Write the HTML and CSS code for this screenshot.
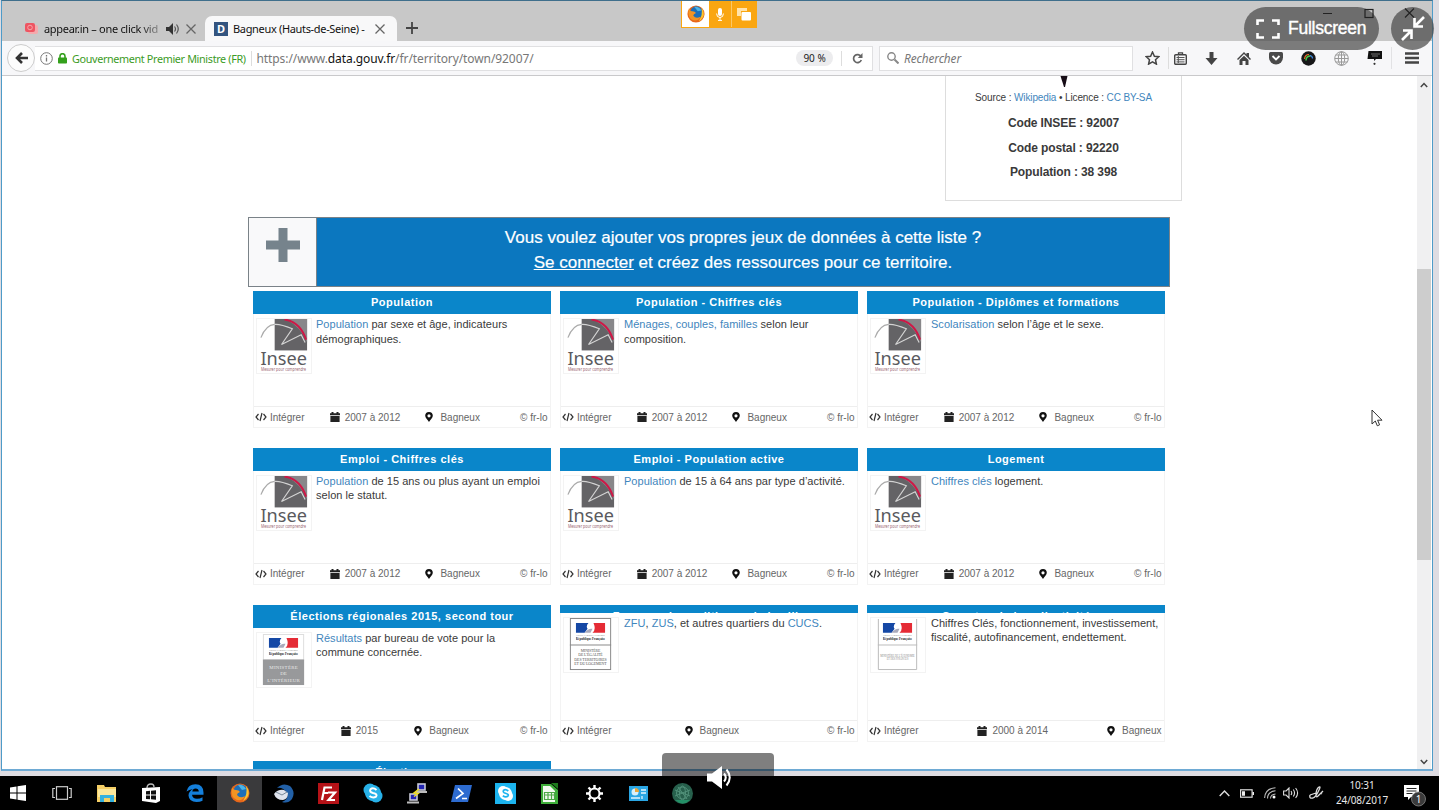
FILE: index.html
```html
<!DOCTYPE html>
<html lang="fr">
<head>
<meta charset="utf-8">
<title>Bagneux (Hauts-de-Seine)</title>
<link rel="stylesheet" href="styles.css">
</head>
<body>
<svg class="defs" width="0" height="0">
  <symbol id="insee" viewBox="0 0 55 55">
    <rect x="18" y="0" width="33" height="32" fill="#646366"/>
    <path d="M29 0h22v24Q46 9 29 0z" fill="#88878a"/>
    <path d="M28 .5Q44 3 50 21" fill="none" stroke="#cf1746" stroke-width="2"/>
    <path d="M4 19Q9 6 18 5.500" fill="none" stroke="#aaa" stroke-width="1.200"/>
    <path d="M18 5.500Q24 5 36 10L25 26L45 16L49 24" fill="none" stroke="#d4d4d4" stroke-width="1.200"/>
    <text x="3.500" y="46.500" class="insee-name" textLength="47.500" lengthAdjust="spacingAndGlyphs">Insee</text>
    <text x="4" y="53" class="insee-tag" textLength="46" lengthAdjust="spacingAndGlyphs">Mesurer pour comprendre</text>
  </symbol>
  <symbol id="flag" viewBox="0 0 30 19">
    <path d="M0 0h13q-3 3-1 6l-3 4H0z" fill="#1548a5"/><path d="M18 0h12v10H17q4-3 1-10z" fill="#e52b35"/>
    <path d="M9 10q4-5 8-4l-2 4z" fill="#aab"/>
    <text x="0" y="13.800" class="flag-sub" textLength="30" lengthAdjust="spacingAndGlyphs">Liberté • Égalité • Fraternité</text>
    <text x="0" y="17.500" class="flag-main" textLength="30" lengthAdjust="spacingAndGlyphs">République Française</text>
  </symbol>
  <symbol id="code" viewBox="0 0 12 10"><path d="M3.500 2L1 5l2.500 3M8.500 2L11 5l-2.500 3M7 1L5 9" fill="none" stroke="#333" stroke-width="1.200"/></symbol>
  <symbol id="cal" viewBox="0 0 10 10"><path d="M0 1.300h1.500V0h2v1.300h3V0h2v1.300H10v2H0zM.4 4h9.200v6H.4z" fill="#222"/></symbol>
  <symbol id="pin" viewBox="0 0 8 10"><path fill-rule="evenodd" d="M4 0a3.800 3.800 0 0 1 3.800 3.800C7.800 6 5.500 7.500 4 10 2.500 7.500.2 6 .2 3.800A3.800 3.800 0 0 1 4 0zm0 2.200a1.600 1.600 0 1 0 0 3.200 1.600 1.600 0 0 0 0-3.200z" fill="#111"/></symbol>
  <symbol id="firefox" viewBox="0 0 20 20">
    <circle cx="10" cy="10" r="9.500" fill="#e8671a"/><circle cx="10.500" cy="8.500" r="7" fill="#1d6fb8"/><path d="M8 2q5-1 8 4l-4 1z" fill="#49b5e8"/>
    <path d="M2 4q1 3 4 3 3 0 4 2-3 1-3 3 3 4 8 1-2 5-8 4Q0 15 2 4z" fill="#f39423"/><path d="M16 3q4 5 2 10-2 4-5 5 5-7 3-15z" fill="#fbc52d"/>
  </symbol>
</svg>

<div class="desktop">
  <main class="window">
    <div class="tabs">
      <div class="tab tab-idle">
        <svg width="13" height="13" viewBox="0 0 13 13"><rect x="3" y="3" width="10" height="9" rx="2" fill="#f4a9ac"/><rect width="10" height="9" y="1" rx="2" fill="#ee5562"/><circle cx="5" cy="5.500" r="2.300" fill="none" stroke="#f9a5a8"/></svg>
        <span class="tab-title fade">appear.in – one click vid</span>
        <svg width="14" height="12" viewBox="0 0 14 12"><path d="M0 4h3l4-4v12L3 8H0z" fill="#333"/><path d="M8.500 3.500q2 2.500 0 5M10.500 1.500q3.500 4.500 0 9" fill="none" stroke="#555" stroke-width="1.200"/></svg>
        <svg width="10" height="10" viewBox="0 0 10 10"><path d="M.5.5l9 9m0-9l-9 9" stroke="#666" stroke-width="1.300"/></svg>
      </div>
      <div class="tab tab-active">
        <span class="fav">D</span>
        <span class="tab-title t2">Bagneux (Hauts-de-Seine) -</span>
        <svg width="10" height="10" viewBox="0 0 10 10"><path d="M.5.5l9 9m0-9l-9 9" stroke="#666" stroke-width="1.300"/></svg>
      </div>
      <svg class="plus" width="12" height="12" viewBox="0 0 12 12"><path d="M6 0v12M0 6h12" stroke="#444" stroke-width="1.800"/></svg>
    </div>

    <div class="toolbar">
      <span class="back"><svg width="13" height="12" viewBox="0 0 13 12"><path d="M7 1L2 6l5 5M2 6h11" fill="none" stroke="#333" stroke-width="2.600"/></svg></span>
      <div class="url">
        <svg width="13" height="13" viewBox="0 0 13 13"><circle cx="6.500" cy="6.500" r="5.800" fill="none" stroke="#777"/><path d="M6.500 5.500v4M6.500 3v1.500" stroke="#777" stroke-width="1.300"/></svg>
        <svg class="lock" width="9" height="11" viewBox="0 0 9 11"><path d="M2 5V3.200a2.500 2.500 0 0 1 5 0V5" fill="none" stroke="#34a01c" stroke-width="1.600"/><rect y="4.500" width="9" height="6" rx=".8" fill="#34a01c"/></svg>
        <span class="ident">Gouvernement Premier Ministre (FR)</span>
        <span class="addr">https://www.<b>data.gouv.fr</b>/fr/territory/town/92007/</span>
        <span class="zoom">90 %</span>
        <span class="reload"><svg width="11" height="11" viewBox="0 0 11 11"><path d="M9 3.500A4 4 0 1 0 9.300 7" fill="none" stroke="#666" stroke-width="1.700"/><path d="M10.500 0v5H5.800z" fill="#666"/></svg></span>
      </div>
      <div class="search">
        <svg width="12" height="12" viewBox="0 0 12 12"><circle cx="4.500" cy="4.500" r="3.700" fill="none" stroke="#888" stroke-width="1.400"/><path d="M7.500 7.500l4 4" stroke="#888" stroke-width="2"/></svg>
        <i>Rechercher</i>
      </div>
      <div class="tools">
        <span><svg width="15" height="14" viewBox="0 0 15 14"><path d="M7.500 1l1.900 4.200 4.400.5-3.300 3 .9 4.400-3.900-2.200-3.900 2.200.9-4.400-3.300-3 4.400-.5z" fill="none" stroke="#444" stroke-width="1.500"/></svg></span>
        <span class="sep-l"><svg width="13" height="13" viewBox="0 0 13 13"><path d="M4.500 2.500V.8h4v1.700" fill="none" stroke="#444" stroke-width="1.300"/><rect x=".7" y="2.700" width="11.600" height="9.600" rx="1" fill="none" stroke="#444" stroke-width="1.400"/><path d="M2.500 5.500h8M2.500 7.700h8M2.500 9.900h8M4.300 4v7" stroke="#555"/></svg></span>
        <span><svg width="13" height="13" viewBox="0 0 13 13"><path d="M4.500 0h4v6h4l-6 7-6-7h4z" fill="#444"/></svg></span>
        <span><svg width="14" height="13" viewBox="0 0 14 13"><path d="M7 0l2.500 2.500V1H12v4l2 2-1 1-6-6-6 6-1-1zM2.500 8L7 3.700 11.500 8v5H8.500V9h-3v4h-3z" fill="#444"/></svg></span>
        <span><svg width="14" height="13" viewBox="0 0 14 13"><path d="M1.500 0h11Q14 0 14 1.500v4a7 7 0 0 1-14 0v-4Q0 0 1.500 0z" fill="#4a4a4a"/><path d="M3.500 4L7 7.500 10.500 4" fill="none" stroke="#fff" stroke-width="1.800"/></svg></span>
        <span><svg width="15" height="15" viewBox="0 0 15 15"><circle cx="7.500" cy="7.500" r="7.200" fill="#171719"/><path d="M3.500 8Q4 3.500 8 3.500" fill="none" stroke="#ef6a26" stroke-width="1.200"/><path d="M5 9.500q0-4.500 4.500-4.500" fill="none" stroke="#45c749" stroke-width="1.500"/><path d="M9 4.500q2.500.5 2.500 3" fill="none" stroke="#3d8bea" stroke-width="1.200"/></svg></span>
        <span><svg width="15" height="15" viewBox="0 0 15 15"><g fill="none" stroke="#999"><circle cx="7.500" cy="7.500" r="6.800"/><ellipse cx="7.500" cy="7.500" rx="3.200" ry="6.800"/><path d="M7.500.7v13.600M.7 7.500h13.600M1.700 4h11.600M1.700 11h11.600"/></g></svg></span>
        <span><svg width="15" height="14" viewBox="0 0 15 14"><path d="M1.500 0H15v8H9L7 10V8H.5z" fill="#111"/><path d="M4 3h9M5 5h6" stroke="#888" stroke-width=".8"/><circle cx="7.500" cy="12.800" r="1.100" fill="#333"/></svg></span>
        <span class="menu"><svg width="14" height="12" viewBox="0 0 14 12"><path d="M0 1.500h14M0 6h14M0 10.500h14" stroke="#444" stroke-width="2.300"/></svg></span>
      </div>
    </div>

    <div class="viewport">
      <div class="page">
        <aside class="facts">
          <svg class="tip" width="8" height="12" viewBox="0 0 8 12"><path d="M.5 0h7L5 11H4z" fill="#160c16"/></svg>
          <p class="source">Source : <a>Wikipedia</a> • Licence : <a>CC BY-SA</a></p>
          <p class="fact">Code INSEE : 92007</p>
          <p class="fact">Code postal : 92220</p>
          <p class="fact">Population : 38 398</p>
        </aside>

        <section class="banner">
          <div class="add"><svg width="34" height="34" viewBox="0 0 34 34"><path d="M12.500 0h9v12.500H34v9H21.500V34h-9V21.500H0v-9h12.500z" fill="#76838c"/></svg></div>
          <div class="banner-text"><p>Vous voulez ajouter vos propres jeux de données à cette liste ?</p><p><u>Se connecter</u> et créez des ressources pour ce territoire.</p></div>
        </section>

        <section class="cards">
          <article class="card"><h2>Population</h2><div class="body"><svg class="logo"><use href="#insee"/></svg><p><a>Population</a> par sexe et âge, indicateurs<br>démographiques.</p></div>
            <footer><span><svg class="code"><use href="#code"/></svg>Intégrer</span><span><svg class="cal"><use href="#cal"/></svg>2007 à 2012</span><span><svg class="pin"><use href="#pin"/></svg>Bagneux</span><span class="lic">© fr-lo</span></footer></article>
          <article class="card"><h2>Population - Chiffres clés</h2><div class="body"><svg class="logo"><use href="#insee"/></svg><p><a>Ménages, couples, familles</a> selon leur<br>composition.</p></div>
            <footer><span><svg class="code"><use href="#code"/></svg>Intégrer</span><span><svg class="cal"><use href="#cal"/></svg>2007 à 2012</span><span><svg class="pin"><use href="#pin"/></svg>Bagneux</span><span class="lic">© fr-lo</span></footer></article>
          <article class="card"><h2>Population - Diplômes et formations</h2><div class="body"><svg class="logo"><use href="#insee"/></svg><p><a>Scolarisation</a> selon l’âge et le sexe.</p></div>
            <footer><span><svg class="code"><use href="#code"/></svg>Intégrer</span><span><svg class="cal"><use href="#cal"/></svg>2007 à 2012</span><span><svg class="pin"><use href="#pin"/></svg>Bagneux</span><span class="lic">© fr-lo</span></footer></article>

          <article class="card"><h2>Emploi - Chiffres clés</h2><div class="body"><svg class="logo"><use href="#insee"/></svg><p><a>Population</a> de 15 ans ou plus ayant un emploi<br>selon le statut.</p></div>
            <footer><span><svg class="code"><use href="#code"/></svg>Intégrer</span><span><svg class="cal"><use href="#cal"/></svg>2007 à 2012</span><span><svg class="pin"><use href="#pin"/></svg>Bagneux</span><span class="lic">© fr-lo</span></footer></article>
          <article class="card"><h2>Emploi - Population active</h2><div class="body"><svg class="logo"><use href="#insee"/></svg><p><a>Population</a> de 15 à 64 ans par type d’activité.</p></div>
            <footer><span><svg class="code"><use href="#code"/></svg>Intégrer</span><span><svg class="cal"><use href="#cal"/></svg>2007 à 2012</span><span><svg class="pin"><use href="#pin"/></svg>Bagneux</span><span class="lic">© fr-lo</span></footer></article>
          <article class="card"><h2>Logement</h2><div class="body"><svg class="logo"><use href="#insee"/></svg><p><a>Chiffres clés</a> logement.</p></div>
            <footer><span><svg class="code"><use href="#code"/></svg>Intégrer</span><span><svg class="cal"><use href="#cal"/></svg>2007 à 2012</span><span><svg class="pin"><use href="#pin"/></svg>Bagneux</span><span class="lic">© fr-lo</span></footer></article>

          <article class="card"><h2>Élections régionales 2015, second tour</h2><div class="body">
            <svg class="logo" viewBox="0 0 55 55"><rect x="6.500" y="1.500" width="41" height="26" fill="#fff" stroke="#ddd"/><use href="#flag" x="12" y="5" width="30" height="19"/><rect x="6" y="27" width="42" height="26" fill="#98999b"/><g class="min min-w"><text x="27" y="36.500" textLength="29">MINISTÈRE</text><text x="27" y="43">DE</text><text x="27" y="49.500" textLength="33">L’INTÉRIEUR</text></g></svg>
            <p><a>Résultats</a> par bureau de vote pour la<br>commune concernée.</p></div>
            <footer><span><svg class="code"><use href="#code"/></svg>Intégrer</span><span><svg class="cal"><use href="#cal"/></svg>2015</span><span><svg class="pin"><use href="#pin"/></svg>Bagneux</span><span class="lic">© fr-lo</span></footer></article>
          <article class="card squeezed"><h2>Zonages des politiques de la ville</h2><div class="body">
            <svg class="logo" viewBox="0 0 55 55"><rect x="6.500" y="0.500" width="41" height="52" fill="#fff" stroke="#888"/><path d="M6 27.500h42" stroke="#888"/><use href="#flag" x="12" y="5" width="30" height="19"/><g class="min"><text x="27" y="34.500" textLength="20">MINISTÈRE</text><text x="27" y="39" textLength="25">DE L’ÉGALITÉ</text><text x="27" y="43.500" textLength="33">DES TERRITOIRES</text><text x="27" y="48" textLength="33">ET DU LOGEMENT</text></g></svg>
            <p><a>ZFU</a>, <a>ZUS</a>, et autres quartiers du <a>CUCS</a>.</p></div>
            <footer><span><svg class="code"><use href="#code"/></svg>Intégrer</span><span><svg class="pin"><use href="#pin"/></svg>Bagneux</span><span class="lic">© fr-lo</span></footer></article>
          <article class="card squeezed"><h2>Comptes de la collectivité</h2><div class="body">
            <svg class="logo" viewBox="0 0 55 55"><path d="M7.500 1v51.500h39V1M7 27.500h40" fill="none" stroke="#bbb"/><use href="#flag" x="12" y="5" width="30" height="19"/><g class="min min-s"><text x="27" y="39.500" textLength="35" lengthAdjust="spacingAndGlyphs">MINISTÈRE DE L’ÉCONOMIE</text><text x="27" y="43" textLength="22" lengthAdjust="spacingAndGlyphs">ET DES FINANCES</text></g></svg>
            <p>Chiffres Clés, fonctionnement, investissement,<br>fiscalité, autofinancement, endettement.</p></div>
            <footer><span><svg class="code"><use href="#code"/></svg>Intégrer</span><span><svg class="cal"><use href="#cal"/></svg>2000 à 2014</span><span><svg class="pin"><use href="#pin"/></svg>Bagneux</span></footer></article>

          <article class="card"><h2>Élections</h2></article>
        </section>
      </div>
      <div class="scroll">
        <svg width="8" height="6" viewBox="0 0 8 6"><path d="M.8 5L4 1.500 7.200 5" fill="none" stroke="#444" stroke-width="1.500"/></svg>
        <div class="thumb"></div>
        <svg class="down" width="8" height="6" viewBox="0 0 8 6"><path d="M.8 1L4 4.500 7.200 1" fill="none" stroke="#444" stroke-width="1.500"/></svg>
      </div>
    </div>
  </main>
</div>

<nav class="taskbar">
  <div class="apps">
    <span><svg width="16" height="16" viewBox="0 0 16 16"><path d="M0 2.500l6.500-1v6H0zM7.500 1.300L16 0v7.500H7.500zM0 8.500h6.500v6L0 13.600zM7.500 8.500H16V16l-8.500-1.200z" fill="#fff"/></svg></span>
    <span><svg width="20" height="14" viewBox="0 0 20 14"><g fill="none" stroke="#ccc" stroke-width="1.200"><rect x="4.500" y=".7" width="11" height="12.600"/><path d="M3 2.500H.8v9H3M17 2.500h2.200v9H17"/></g></svg></span>
    <span><svg width="20" height="17" viewBox="0 0 20 17"><path d="M0 0h7l1 2h11v15H0z" fill="#f5cf66"/><path d="M1 4h18v8H1z" fill="#fce79b"/><path d="M3 10h14v7h-4v-4H7v4H3z" fill="#35b1df"/></svg></span>
    <span><svg width="20" height="20" viewBox="0 0 20 20"><path d="M6 5q0-4 4-4 3 0 3 3" fill="none" stroke="#bbb" stroke-width="1.300"/><path d="M1 5l18-1v14l-4 2L1 18z" fill="#fff"/><path d="M5 8.200l4-.4v3.700H5zM10 7.700l5-.5v4.300h-5zM5 12.500h4v3.700L5 16zM10 12.500h5v4.300l-5-.5z" fill="#111"/></svg></span>
    <span><svg width="18" height="18" viewBox="0 0 18 18"><path fill-rule="evenodd" d="M.5 7.500Q2 .2 9.500.2q8 0 8 8.500v2H6q.5 4 5 4 3 0 5.500-1.500v3.500Q14 18 10.500 18 3 18 2.500 11.500q0-4 4.500-6.500Q3 5.500.5 7.500zM6.300 7.500h6.500q-.2-3-3.200-3-2.800 0-3.300 3z" fill="#147fdb"/></svg></span>
    <span class="on"><svg width="20" height="20"><use href="#firefox"/></svg></span>
    <span><svg width="21" height="19" viewBox="0 0 21 19"><path d="M4 4Q10-2 17 2q6 6 2 13-4 5-10 3 7-3 5-9Q10 3 4 4z" fill="#2260a7"/><path d="M1 10q4-5 10-4l4 3q0 6-5 7-7 0-9-6z" fill="#dfe4ed"/><path d="M3 8l6 3 5-3" fill="none" stroke="#789"/></svg></span>
    <span><svg width="21" height="21" viewBox="0 0 21 21"><rect width="21" height="21" fill="#b51217"/><path d="M4 17L6.500 4.500H14M5.500 10H10M10 9.500h7L10.500 17H17" fill="none" stroke="#fff" stroke-width="2.200"/></svg></span>
    <span><svg width="20" height="20" viewBox="0 0 20 20"><circle cx="7" cy="7" r="6.500" fill="#28b1e8"/><circle cx="13" cy="13" r="6.500" fill="#28b1e8"/><circle cx="10" cy="10" r="8" fill="#28b1e8"/><path d="M13.500 7Q10 4 7.500 6.300 6 9 10 10q5 1 3 3.700-3 2-6.500-.7" fill="none" stroke="#fff" stroke-width="2"/></svg></span>
    <span><svg width="20" height="21" viewBox="0 0 20 21"><g fill="#2426b4" stroke="#c9cad6" stroke-width="1.600"><rect x="11" y="1" width="7" height="6"/><rect x="3" y="11" width="7" height="6"/></g><path d="M9 9h11M0 19.500h12" stroke="#bbb" stroke-width="2"/><path d="M12 6L7 10l4 .5-4 3" fill="none" stroke="#f0dd23" stroke-width="1.500"/></svg></span>
    <span><svg width="21" height="17" viewBox="0 0 21 17"><path d="M4 0h17l-4 17H0z" fill="#2d6bd0"/><path d="M7 3.500l5 5-7 5M11 13.500h5" fill="none" stroke="#fff" stroke-width="1.700"/></svg></span>
    <span><svg width="21" height="21" viewBox="0 0 21 21"><rect width="21" height="21" fill="#1cb4ef"/><circle cx="8" cy="8" r="5" fill="#fff"/><circle cx="13" cy="13" r="5" fill="#fff"/><circle cx="10.500" cy="10.500" r="6.500" fill="#fff"/><path d="M13.300 8Q10.500 5.500 8.500 7.300 7.500 9.500 10.500 10.300q4 1 2.300 3-2.300 1.400-5-.5" fill="none" stroke="#1cb4ef" stroke-width="1.700"/></svg></span>
    <span><svg width="17" height="21" viewBox="0 0 17 21"><path d="M0 1h10l7 6v14H0z" fill="#3fae3a"/><path d="M2 3h7l5 5v11H2z" fill="#f3fbf0"/><path d="M10 0h7v6z" fill="#1d7a1c"/><path d="M3.500 9.500h10v7h-10zM3.500 12h10M7 9.500v7M10.500 9.500v7" fill="none" stroke="#4ca845" stroke-width="1.200"/></svg></span>
    <span><svg width="17" height="17" viewBox="0 0 17 17"><circle cx="8.500" cy="8.500" r="5" fill="none" stroke="#fff" stroke-width="2"/><path d="M8.500 0v3M8.500 14v3M0 8.500h3M14 8.500h3M2.500 2.500l2 2M12.500 12.500l2 2M14.500 2.500l-2 2M4.500 12.500l-2 2" stroke="#fff" stroke-width="2.400"/></svg></span>
    <span><svg width="19" height="15" viewBox="0 0 19 15"><rect width="19" height="15" fill="#2aa6e4"/><circle cx="6" cy="6" r="3.500" fill="#d8effa"/><path d="M6 6V2a4 4 0 0 1 4 4z" fill="#e8a63c"/><path d="M12 4h5M12 7h5M2 12h9M13 10v3" stroke="#e3f5fd" stroke-width="1.300"/></svg></span>
    <span><svg width="21" height="21" viewBox="0 0 21 21"><circle cx="10.500" cy="10.500" r="10.500" fill="#27604c"/><g fill="none" stroke="#519079"><circle cx="10.500" cy="10" r="6"/><ellipse cx="10.500" cy="10" rx="3" ry="7"/><path d="M3 7l15 6M3 13l15-6M6 4l9 12"/></g><path d="M3 17h15q-7 7-15 0z" fill="#249067"/></svg></span>
  </div>
  <div class="tray">
    <svg width="11" height="7" viewBox="0 0 11 7"><path d="M.7 6l4.800-5 4.800 5" fill="none" stroke="#ddd" stroke-width="1.400"/></svg>
    <svg class="bat" width="14" height="9" viewBox="0 0 14 9"><rect x=".6" y=".8" width="11.500" height="7.400" fill="none" stroke="#ddd" stroke-width="1.200"/><path d="M2 2.200h3v4.600H2zM12.500 3H14v3h-1.500z" fill="#eee"/></svg>
    <svg class="wifi" width="12" height="12" viewBox="0 0 12 12"><g fill="none" stroke="#bbb" stroke-width="1.100"><path d="M.6 11Q1 1.500 11.500.8M3.500 11.500Q3.500 4.500 11.500 3.800M6.500 11.500q0-4 5-4.500"/></g><circle cx="10" cy="10" r="1.500" fill="#fff"/></svg>
    <svg class="snd" width="16" height="12" viewBox="0 0 16 12"><path d="M.6 4h2.500L6 1v10L3.100 8H.6zM8 4q1.500 2 0 4M10.300 2.500q2.500 3.500 0 7M12.600 1q4 5 0 10" fill="none" stroke="#ddd" stroke-width="1.100"/></svg>
    <svg class="pen" width="15" height="14" viewBox="0 0 15 14"><path d="M1 9q-1 4 3 3 3-1 6-8 2-4 0-3-3 2-3 8 0 3 2 1l5-5-2 2 1 1M1 9l6-2" fill="none" stroke="#ddd" stroke-width="1.300"/></svg>
    <div class="clock"><span>10:31</span><span>24/08/2017</span></div>
    <svg class="notif" width="23" height="23" viewBox="0 0 23 23"><path d="M0 1h15v12H7l-3 3v-3H0z" fill="#fff"/><path d="M2.500 4.500h10M2.500 7h10M2.500 9.500h6" stroke="#222"/><circle cx="14.500" cy="15" r="7" fill="#3b3b3b" stroke="#888" stroke-width=".8"/><text x="14.500" y="18.500" class="badge">1</text></svg>
  </div>
</nav>

<div class="share"><span class="share-ff"><svg width="18" height="18"><use href="#firefox"/></svg></span><span class="share-mic"><svg width="8" height="13" viewBox="0 0 8 13"><rect x="2" width="4" height="8" rx="2" fill="#fff"/><path d="M.6 5.500q0 4 3.400 4t3.400-4M4 9v3M2 12.400h4" fill="none" stroke="#fff"/></svg></span><span class="share-win"><svg width="14" height="13" viewBox="0 0 14 13"><path d="M0 0h10v3H4v5H0z" fill="#ffe3ad"/><rect x="4.500" y="4" width="9.500" height="8.500" rx="1" fill="#fff"/></svg></span></div>
<div class="fullscreen"><svg width="24" height="20" viewBox="0 0 24 20"><path d="M1.500 6V1.500H8M16 1.500h6.500V6M22.500 14v4.500H16M8 18.500H1.500V14" fill="none" stroke="#fff" stroke-width="2.600"/></svg><span>Fullscreen</span></div>
<div class="shrink"><svg width="24" height="25" viewBox="0 0 24 25"><path d="M23 1l-8 8M13.500 2v8.500H22M1 24l8-8M2 14.500h8.500V23" fill="none" stroke="#fff" stroke-width="2.600"/></svg></div>
<svg class="controls" width="92" height="11" viewBox="0 0 92 11"><path d="M0 5.500h9M82 .5l9 9m0-9l-9 9" stroke="#222" stroke-width="1.100"/><rect x="42" y="1.500" width="8" height="8" fill="none" stroke="#222" stroke-width="1.200"/></svg>
<div class="volume"></div>
<svg class="speaker" width="25" height="23" viewBox="0 0 25 23"><path d="M0 7.500h5L15 0v23L5 15.500H0z" fill="#fff"/><path d="M17 7.500q3.500 4 0 8M19.500 3.500q6.500 8 0 16" fill="none" stroke="#fff" stroke-width="2"/></svg>
<svg class="cursor" width="12" height="18" viewBox="0 0 12 18"><path d="M1 1v14l3.300-3 2 4.800 2.300-1-2-4.600H11z" fill="#fff" stroke="#333"/></svg>
</body>
</html>
```

FILE: styles.css
```css
* { box-sizing: border-box; }
body { margin: 0; width: 1439px; height: 810px; overflow: hidden; position: relative; display: flex; flex-direction: column; background: #000; font-family: "Liberation Sans", Arial, sans-serif; }
p, h2 { margin: 0; }
svg { display: block; flex: none; }
.defs { position: absolute; }

.desktop { height: 776px; padding: 0 6px 5px 1px; background: #dedce2; }
.window { height: 771px; display: flex; flex-direction: column; background: #fff; border: 1px solid #4e9bc8; border-top-color: #3f6f8c; border-bottom: 2px solid #6eaad4; overflow: hidden; }

.tabs { height: 40px; flex: none; display: flex; align-items: flex-end; background: #c8c8c8; font: 11px/25px "Noto Sans", sans-serif; color: #111; }
.tab { height: 25px; display: flex; align-items: center; }
.tab-idle { width: 203px; padding-left: 23px; gap: 6px; }
.tab-title { white-space: nowrap; overflow: hidden; letter-spacing: -.33px; }
.fade { width: 116px; letter-spacing: -.3px; -webkit-mask-image: linear-gradient(90deg, #000 82%, rgba(0, 0, 0, .3)); mask-image: linear-gradient(90deg, #000 82%, rgba(0, 0, 0, .3)); }
.tab-active { width: 192px; background: #f8f8f9; border-radius: 7px 7px 0 0; padding-left: 9px; gap: 5px; }
.t2 { width: 137px; }
.fav { width: 14px; height: 14px; background: #33547f; color: #fff; font: bold 11px/14px "Noto Sans", sans-serif; text-align: center; }
.plus { margin: 0 0 7px 9px; }

.toolbar { height: 35px; flex: none; display: flex; align-items: center; background: #f7f7f9; border-bottom: 1px solid #c9c9cb; font-family: "Noto Sans", sans-serif; }
.back { width: 28px; height: 28px; margin-left: 5px; border: 1px solid #ccc; border-radius: 50%; background: #fcfcfc; display: flex; align-items: center; justify-content: center; flex: none; }
.url { width: 838px; height: 25px; display: flex; align-items: center; background: #fff; border: 1px solid #e0e0e2; border-left: 0; padding-left: 5px; font-size: 11.500px; }
.lock { margin-left: 5px; }
.ident { width: 180px; flex: none; margin-left: 5px; border-right: 1px solid #ddd; color: #3b9b25; font-size: 10.800px; white-space: nowrap; letter-spacing: -.35px; }
.addr { margin-left: 4.500px; color: #777; white-space: nowrap; letter-spacing: -.09px; font-size: 12px; }
.addr b { font-weight: 400; color: #111; }
.zoom { width: 37px; height: 16px; margin-left: auto; margin-right: -3px; border-radius: 8px; background: #ececee; font-size: 10px; line-height: 16px; text-align: center; color: #222; }
.reload { margin-left: 11px; width: 31px; height: 15px; border-left: 1px solid #ddd; display: flex; align-items: center; justify-content: center; }
.url { width: 840px; }
.search { width: 254px; height: 25px; margin-left: 6px; display: flex; align-items: center; gap: 5px; padding-left: 7px; background: #fff; border: 1px solid #e0e0e2; color: #777; font-size: 11.800px; letter-spacing: -.1px; }
.tools { display: flex; align-items: center; margin-left: 4px; }
.tools span { width: 32.600px; height: 22px; display: flex; align-items: center; justify-content: center; }
.tools span:nth-child(1) { width: 31px; }
.tools .sep-l { width: 25px; border-left: 1px solid #ddd; }
.tools span:nth-child(3) { width: 37px; }
.tools span:nth-child(4) { width: 28px; }
.tools span:nth-child(5) { width: 37px; }
.tools span:nth-child(6) { width: 28.500px; }
.tools span:nth-child(7) { width: 36px; }
.tools span:nth-child(8) { width: 30px; }
.tools .menu { width: 41px; border-left: 1px solid #e2e2e4; margin-left: 2px; }

.viewport { flex: 1; min-height: 0; display: flex; overflow: hidden; }
.page { width: 1415px; padding-left: 246px; overflow: hidden; }
.facts { width: 237px; height: 125px; margin-left: 697px; border: 1px solid #ddd; border-top: 0; display: flex; flex-direction: column; align-items: center; color: #3a3a3a; }
.tip { height: 12px; }
.source { margin-top: 2px; font-size: 10px; line-height: 15px; letter-spacing: -.12px; white-space: nowrap; }
a { color: #3f86bd; }
.fact { font-weight: 700; font-size: 12px; line-height: 24.500px; letter-spacing: -.12px; }
.source + .fact { margin-top: 6px; }
.banner { width: 922px; height: 70px; margin-top: 16px; border: 1px solid #7a8288; display: flex; background: #0b77bf; color: #fff; }
.add { width: 68px; background: #f9f9fa; border-right: 1px solid #7a8288; display: flex; justify-content: center; padding-top: 10px; }
.banner-text { flex: 1; padding-top: 8px; font-size: 17px; line-height: 24.500px; text-align: center; white-space: nowrap; -webkit-text-stroke: .2px #fff; }
.cards { display: grid; grid-template-columns: repeat(3, 298px); grid-auto-rows: 137px; column-gap: 9px; row-gap: 19.800px; margin: 4px 0 0 5px; }
.card { display: flex; flex-direction: column; border: 1px solid #f3f3f3; border-top: 0; }
.card h2 { height: 23px; flex: none; margin: 0 -1px; background: #0a86ca; color: #fff; font-size: 11px; line-height: 23px; text-align: center; letter-spacing: .52px; overflow: hidden; }
.squeezed h2 { height: 8px; }
.body { flex: 1; display: flex; padding: 3px 0 0 2px; font-size: 11px; line-height: 14.600px; letter-spacing: .03px; color: #3a3a3a; white-space: nowrap; }
.card:not(:nth-child(3n+1)) .body p { margin-left: 1px; }
.logo { width: 56px; height: 56px; border: 1px solid #f3f3f3; margin: 1px 4px 0 0; }
.card footer { height: 21px; flex: none; border-top: 1px solid #eee; padding: 0 2.500px 0 1px; display: flex; justify-content: space-between; align-items: center; font-size: 10px; color: #666; white-space: nowrap; }
.card footer span { display: flex; align-items: center; }
.code { width: 12px; height: 10px; margin-right: 3px; }
.cal { width: 10px; height: 10px; margin-right: 5px; }
.pin { width: 8px; height: 10px; margin-right: 7px; }
.card footer .lic { padding-left: 15px; }
.insee-name { font: 19px "Noto Sans", sans-serif; fill: #5a5a5e; }
.insee-tag { font: 4.500px "Noto Sans", sans-serif; fill: #99636f; }
.flag-sub { font: 2.500px "Liberation Serif", serif; fill: #777; }
.flag-main { font: bold 3.300px "Liberation Serif", serif; fill: #222; }
.min { font: 4px "Liberation Serif", serif; fill: #555; text-anchor: middle; }
.min-w { font-size: 5px; fill: #e8e8e8; }
.min-s { font-size: 3px; fill: #888; }

.scroll { width: 14px; background: #f0f0f1; display: flex; flex-direction: column; align-items: center; padding: 6px 0 4px; }
.thumb { width: 14px; height: 291px; margin-top: 181px; background: #cdcdcd; }
.down { margin-top: auto; }

.taskbar { height: 34px; display: flex; background: #000; overflow: hidden; }
.apps { display: flex; margin-left: -4px; }
.apps span { width: 44.300px; height: 34px; display: flex; align-items: center; justify-content: center; }
.apps .on { background: #3a3a3c; }
.tray { margin-left: auto; display: flex; align-items: center; color: #e8e8e8; }
.bat { margin-left: 10px; }
.wifi { margin-left: 10px; }
.snd { margin-left: 7px; }
.pen { margin-left: 10px; }
.clock { width: 54px; margin-left: 11px; display: flex; flex-direction: column; align-items: center; font: 10px/15px "Noto Sans", sans-serif; letter-spacing: -.1px; white-space: nowrap; }
.notif { margin: 4px 12px 0 15px; }
.badge { font: 10px "Noto Sans", sans-serif; fill: #fff; text-anchor: middle; }

.share { position: absolute; left: 681px; top: 1px; width: 76px; height: 27px; padding: 0 1px 1px; display: flex; background: #faa611; }
.share span { display: flex; align-items: center; justify-content: center; }
.share-ff { width: 27px; background: #fff; }
.share-mic { width: 23px; border-right: 1px solid #fcc765; }
.share-win { width: 24px; }
.fullscreen { position: absolute; left: 1244px; top: 7px; width: 135px; height: 43px; border-radius: 22px; background: rgba(70, 70, 70, .7); display: flex; align-items: center; gap: 8px; padding-left: 12px; color: #fff; font-size: 17.500px; letter-spacing: -.25px; }
.fullscreen span { -webkit-text-stroke: .4px #fff; }
.shrink { position: absolute; left: 1391px; top: 7px; width: 43px; height: 43px; border-radius: 50%; background: rgba(70, 70, 70, .7); display: flex; align-items: center; justify-content: center; }
.controls { position: absolute; left: 1323px; top: 8px; }
.volume { position: absolute; left: 662px; top: 753px; width: 112px; height: 23px; border-radius: 4px 4px 0 0; background: rgba(0, 0, 0, .5); }
.speaker { position: absolute; left: 707px; top: 766px; }
.cursor { position: absolute; left: 1371px; top: 409px; }
```
